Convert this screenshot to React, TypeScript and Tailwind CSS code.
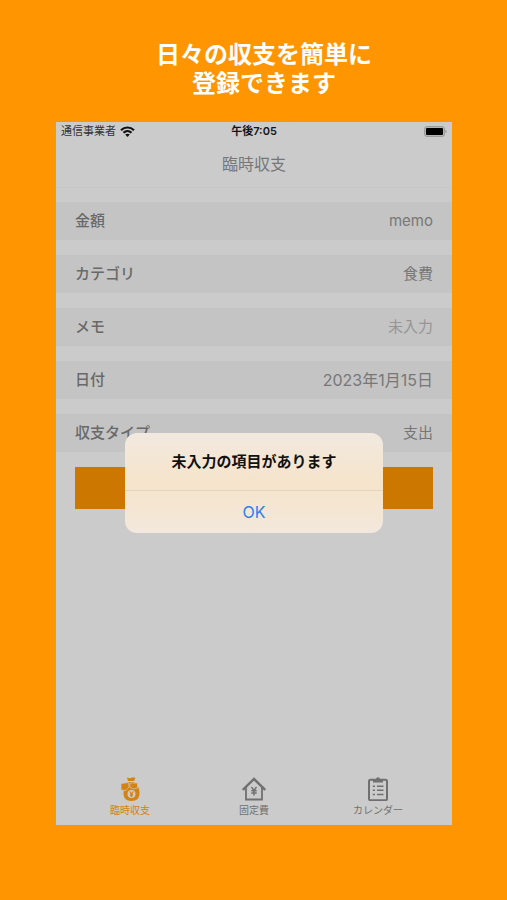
import { useState } from "react";

type Tab = "extra" | "fixed" | "calendar";

const rowClass = "flex h-[38px] items-center justify-between bg-[#c4c4c4] px-[19px] text-[15px]";
const labelClass = "shrink-0 font-medium text-[#696969]";
const fieldClass =
    "w-40 appearance-none bg-transparent text-right text-[#777777] outline-none placeholder:text-[#969696] placeholder:opacity-100";

function WifiIcon() {
    return (
        <svg className="h-[11px] w-[15px]" viewBox="0 0 15 11" fill="none" stroke="#111" strokeWidth="2.2">
            <path d="M1 4.2C4.7 0.6 10.3 0.6 14 4.2" />
            <path d="M3.5 6.8C5.8 4.6 9.2 4.6 11.5 6.8" />
            <path d="M5.2 8.6C6.6 7.3 8.4 7.3 9.8 8.6L7.5 11Z" fill="#111" stroke="none" />
        </svg>
    );
}

function BatteryIcon() {
    return (
        <svg className="h-[11px] w-[23px]" viewBox="0 0 23 11">
            <rect x="0.5" y="0.5" width="20" height="10" rx="2.5" fill="#b4b4b4" stroke="#9c9c9c" />
            <rect x="2" y="2" width="17" height="7" rx="1" fill="#000" />
            <path d="M21.5 3.8C22.8 4.4 22.8 6.6 21.5 7.2Z" fill="#888" />
        </svg>
    );
}

function MoneyBagIcon() {
    return (
        <svg className="h-6 w-6" viewBox="0 0 24 24">
            <path d="M9 0.5L12 1.2L15 0.3L17.5 1L16 4H10Z" fill="currentColor" />
            <path d="M10 5H16C20 8 21.5 12 21.5 16C21.5 21 19 24 13.5 24C8 24 5.5 21 5.5 16C5.5 12 7 8 10 5Z" fill="currentColor" />
            <path d="M3 6.5L10.5 5.5L11 10L8 13.5L3 13Z" fill="currentColor" stroke="#cbcbcb" strokeWidth="0.7" />
            <path d="M12 6H19.5V11L16 12L12 10.5Z" fill="currentColor" stroke="#cbcbcb" strokeWidth="0.7" />
            <circle cx="13.5" cy="17" r="4" fill="#cbcbcb" />
            <path d="M11.7 14.5L13.5 17L15.3 14.5M13.5 17V20M11.9 17.3H15.1M11.9 18.8H15.1" fill="none" stroke="currentColor" strokeWidth="1.1" />
        </svg>
    );
}

function HouseIcon() {
    return (
        <svg className="h-6 w-6" viewBox="0 0 24 24" fill="none" stroke="currentColor">
            <path d="M0.8 13L12 2L23.2 13" strokeWidth="2.4" />
            <path d="M4 10.5V22.5H20V10.5" strokeWidth="1.8" />
            <path d="M9.5 10L12 13.5L14.5 10M12 13.5V18.5M9.3 13.8H14.7M9.3 16H14.7" strokeWidth="1.4" />
        </svg>
    );
}

function ClipboardIcon() {
    return (
        <svg className="h-6 w-6" viewBox="0 0 24 24" fill="none" stroke="currentColor">
            <rect x="3" y="2.8" width="18" height="20.4" rx="1.5" strokeWidth="2" />
            <path d="M7 5.5V2.5H10C10 -0.6 14 -0.6 14 2.5H17V5.5Z" fill="currentColor" stroke="none" />
            <path d="M11 9.3H17.5M11 13.3H17.5M11 17.5H17.5" strokeWidth="1.6" />
            <path d="M6.8 9.3H9M6.8 13.3H9M6.8 17.5H9" strokeWidth="1.6" />
        </svg>
    );
}

const tabs = [
    { id: "extra" as Tab, label: "臨時収支", Icon: MoneyBagIcon },
    { id: "fixed" as Tab, label: "固定費", Icon: HouseIcon },
    { id: "calendar" as Tab, label: "カレンダー", Icon: ClipboardIcon },
];

export default function App() {
    const [tab, setTab] = useState<Tab>("extra");
    const [alertOpen, setAlertOpen] = useState(true);

    return (
        <div
            lang="ja"
            className="flex min-h-screen flex-col bg-[#ff9500] pt-10 pr-[55px] pb-[75px] pl-14 font-['Inter','Noto_Sans_CJK_JP',sans-serif]"
        >
            <h1 className="mb-6 pl-5 text-center text-[24px] leading-[29px] font-bold text-white">
                日々の収支を簡単に
                <br />
                登録できます
            </h1>

            <div className="relative flex flex-1 flex-col bg-[#cbcbcb]">
                {/* Status bar */}
                <div className="grid h-[18px] grid-cols-3 items-center px-[5px] text-[11px] leading-[18px]">
                    <div className="flex items-center gap-1 text-[#333]">
                        通信事業者
                        <WifiIcon />
                    </div>
                    <div className="text-center font-semibold text-[#151515]">午後7:05</div>
                    <div className="flex justify-end">
                        <BatteryIcon />
                    </div>
                </div>

                <header className="flex h-12 items-center justify-center border-b border-[#c7c7c7]">
                    <h2 className="text-[16px] text-[#777777]">臨時収支</h2>
                </header>

                {/* Form */}
                <form className="mt-[14px] flex flex-1 flex-col gap-[15px]" onSubmit={(e) => {
                    e.preventDefault();
                    setAlertOpen(true);
                }}>
                    <div className={rowClass}>
                        <label htmlFor="amount" className={labelClass}>金額</label>
                        <input id="amount" defaultValue="memo" className={fieldClass} />
                    </div>
                    <div className={rowClass}>
                        <label htmlFor="category" className={labelClass}>カテゴリ</label>
                        <select id="category" className={fieldClass}>
                            <option>食費</option>
                        </select>
                    </div>
                    <div className={rowClass}>
                        <label htmlFor="memo" className={labelClass}>メモ</label>
                        <input id="memo" placeholder="未入力" className={fieldClass} />
                    </div>
                    <div className={rowClass}>
                        <label htmlFor="date" className={labelClass}>日付</label>
                        <input id="date" defaultValue="2023年1月15日" className={`${fieldClass} text-[16px]`} />
                    </div>
                    <div className={rowClass}>
                        <label htmlFor="type" className={labelClass}>収支タイプ</label>
                        <select id="type" className={fieldClass}>
                            <option>支出</option>
                        </select>
                    </div>
                    <button type="submit" aria-label="登録" className="mx-[19px] h-[42px] bg-[#cc7700]" />
                </form>

                {/* Tab bar */}
                <nav className="grid grid-cols-3 px-3 pb-2">
                    {tabs.map(({ id, label, Icon }) => (
                        <button
                            key={id}
                            type="button"
                            onClick={() => setTab(id)}
                            className={`flex flex-col items-center gap-[2px] text-[10px] leading-[14px]
                                ${tab === id ? "text-[#d38214]" : "text-[#707070]"}`}
                        >
                            <Icon />
                            {label}
                        </button>
                    ))}
                </nav>

                {/* Alert */}
                {alertOpen && (
                    <div className="absolute inset-0 flex items-center justify-center pt-[18px]">
                        <div
                            role="alertdialog"
                            aria-labelledby="alert-title"
                            className="w-[258px] overflow-hidden rounded-xl bg-linear-to-b from-[#f1e9df] via-[#f6e4cb] to-[#f2e8dc]"
                        >
                            <p id="alert-title" className="py-[17px] text-center text-[15px] leading-[23px] font-semibold text-[#111]">
                                未入力の項目があります
                            </p>
                            <button
                                type="button"
                                onClick={() => setAlertOpen(false)}
                                className="h-[43px] w-full border-t border-[#e2d3bd] text-[16px] text-[#267ff0]"
                            >
                                OK
                            </button>
                        </div>
                    </div>
                )}
            </div>
        </div>
    );
}
